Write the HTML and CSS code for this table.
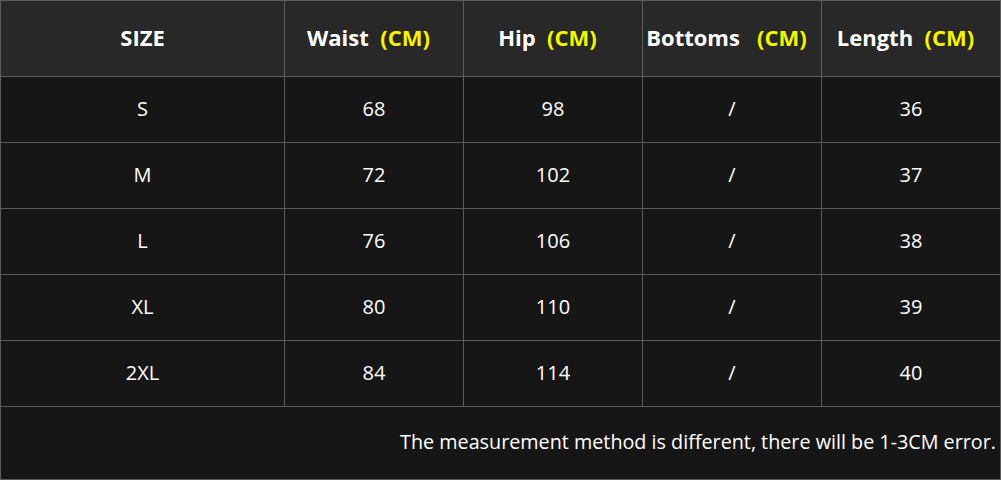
FILE: index.html
```html
<!DOCTYPE html>
<html>
<head>
<meta charset="utf-8">
<link rel="stylesheet" href="styles.css">
</head>
<body>
<div class="chart">
  <div class="cell head">SIZE</div>
  <div class="cell head measure">Waist&nbsp;&nbsp;<span class="unit">(CM)</span></div>
  <div class="cell head measure">Hip&nbsp;&nbsp;<span class="unit">(CM)</span></div>
  <div class="cell head measure">Bottoms&nbsp;&nbsp;&nbsp;<span class="unit">(CM)</span></div>
  <div class="cell head measure">Length&nbsp;&nbsp;<span class="unit">(CM)</span></div>

  <div class="cell">S</div><div class="cell">68</div><div class="cell">98</div><div class="cell">/</div><div class="cell">36</div>
  <div class="cell">M</div><div class="cell">72</div><div class="cell">102</div><div class="cell">/</div><div class="cell">37</div>
  <div class="cell">L</div><div class="cell">76</div><div class="cell">106</div><div class="cell">/</div><div class="cell">38</div>
  <div class="cell">XL</div><div class="cell">80</div><div class="cell">110</div><div class="cell">/</div><div class="cell">39</div>
  <div class="cell">2XL</div><div class="cell">84</div><div class="cell">114</div><div class="cell">/</div><div class="cell">40</div>

  <div class="cell note">The measurement method is different, there will be 1-3CM error.</div>
</div>
</body>
</html>
```
FILE: styles.css
```css
html, body {
  margin: 0;
  padding: 0;
  background: #161616;
}
.chart {
  width: 1001px;
  height: 480px;
  box-sizing: border-box;
  display: grid;
  grid-template-columns: 283px 178px 178px 178px 178px;
  grid-template-rows: 75px repeat(5, 65px) 72px;
  gap: 1px;
  padding: 1px;
  background: #5c5c5c;
  font-family: "Open Sans", "Noto Sans", sans-serif;
  color: #ffffff;
}
.cell {
  background: #161616;
  display: flex;
  align-items: center;
  justify-content: center;
  font-size: 20px;
  white-space: nowrap;
  padding-bottom: 3px;
}
.head {
  background: #282828;
  font-weight: 700;
  font-size: 22px;
  padding-bottom: 4px;
}
.measure {
  padding-right: 11px;
}
.unit {
  color: #f5f500;
}
.note {
  grid-column: 1 / -1;
  justify-content: flex-end;
  padding-right: 4px;
  font-size: 19.75px;
}
```
